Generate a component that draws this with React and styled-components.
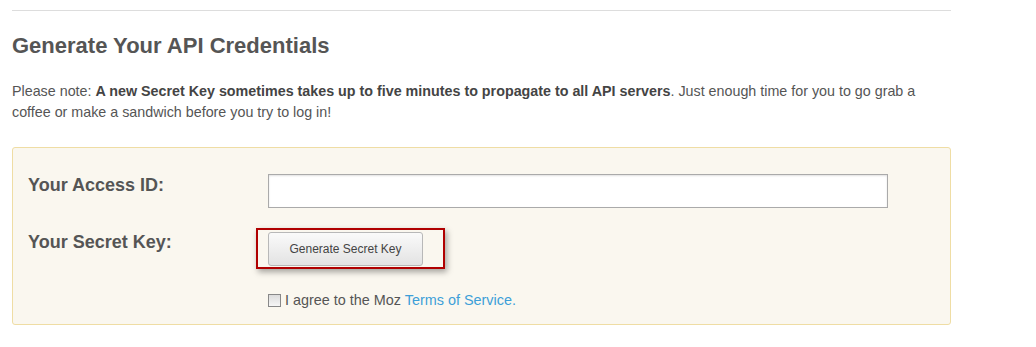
import styled, { createGlobalStyle } from "styled-components";

const GlobalStyle = createGlobalStyle`
    body{
        margin:0;
        background:#fff;
        font-family:"Liberation Sans", Arial, sans-serif;
        color:#555;
    }
`
const Page = styled.div`
    width:939px;
    margin-left:12px;
    padding-top:10px;
`
const Rule = styled.hr`
    border:0;
    border-top:1px solid #ddd;
    margin:0;
`
const Title = styled.h2`
    font-size:22px;
    font-weight:bold;
    color:#555;
    margin:22px 0 0;
    line-height:26px;
`
const Note = styled.p`
    font-size:14.3px;
    line-height:21px;
    margin:22px 0 0;
    color:#555;
    b{
        color:#444;
    }
`
const Panel = styled.div`
    margin-top:24px;
    background:#faf7ef;
    border:1px solid #efdda4;
    border-radius:3px;
    padding:26px 15px 16px;
`
const Row = styled.div`
    display:grid;
    grid-template-columns:240px 1fr;
    align-items:start;
    margin-bottom:${p => p.$gap || 0}px;
`
const Label = styled.label`
    font-size:18px;
    font-weight:bold;
    color:#555;
    line-height:20px;
    padding-top:${p => p.$top || 0}px;
`
const Input = styled.input`
    box-sizing:border-box;
    width:620px;
    height:34px;
    border:1px solid #aaa;
    box-shadow:inset 0 1px 2px rgba(0,0,0,0.12);
    background:#fff;
    outline:none;
`
const Highlight = styled.span`
    position:relative;
    display:inline-block;
    &::after{
        content:"";
        position:absolute;
        left:-12px;
        top:-4px;
        width:185px;
        height:37px;
        border:2px solid #b00000;
        box-shadow:2px 3px 6px rgba(0,0,0,0.35);
        pointer-events:none;
    }
`
const Button = styled.button`
    box-sizing:border-box;
    width:155px;
    height:34px;
    border:1px solid #b8b8b8;
    border-radius:3px;
    background:linear-gradient(#fafafa, #e3e3e3);
    font-family:"Liberation Sans", Arial, sans-serif;
    font-size:12px;
    color:#444;
    padding:0;
    cursor:pointer;
`
const Agree = styled.div`
    display:flex;
    align-items:center;
    gap:4px;
    font-size:14.4px;
    color:#555;
`
const Check = styled.input`
    appearance:none;
    margin:0;
    width:13px;
    height:13px;
    border:1px solid #888;
    background:linear-gradient(#dcdcdc, #f6f6f6);
    box-sizing:border-box;
`
const TermsLink = styled.a`
    color:#3d9fd8;
    text-decoration:none;
`

export default function App(){
    return(
        <>
            <GlobalStyle/>
            <Page>
                <Rule/>
                <Title>Generate Your API Credentials</Title>
                <Note>
                    Please note: <b>A new Secret Key sometimes takes up to five minutes to propagate to all API servers</b>. Just enough time for you to go grab a coffee or make a sandwich before you try to log in!
                </Note>
                <Panel>
                    <Row $gap={24}>
                        <Label $top={1}>Your Access ID:</Label>
                        <Input type="text"/>
                    </Row>
                    <Row $gap={26}>
                        <Label $top={0}>Your Secret Key:</Label>
                        <div>
                            <Highlight>
                                <Button>Generate Secret Key</Button>
                            </Highlight>
                        </div>
                    </Row>
                    <Row>
                        <span></span>
                        <Agree>
                            <Check type="checkbox"/>
                            <span>I agree to the Moz <TermsLink href="#">Terms of Service.</TermsLink></span>
                        </Agree>
                    </Row>
                </Panel>
            </Page>
        </>
    )
}
